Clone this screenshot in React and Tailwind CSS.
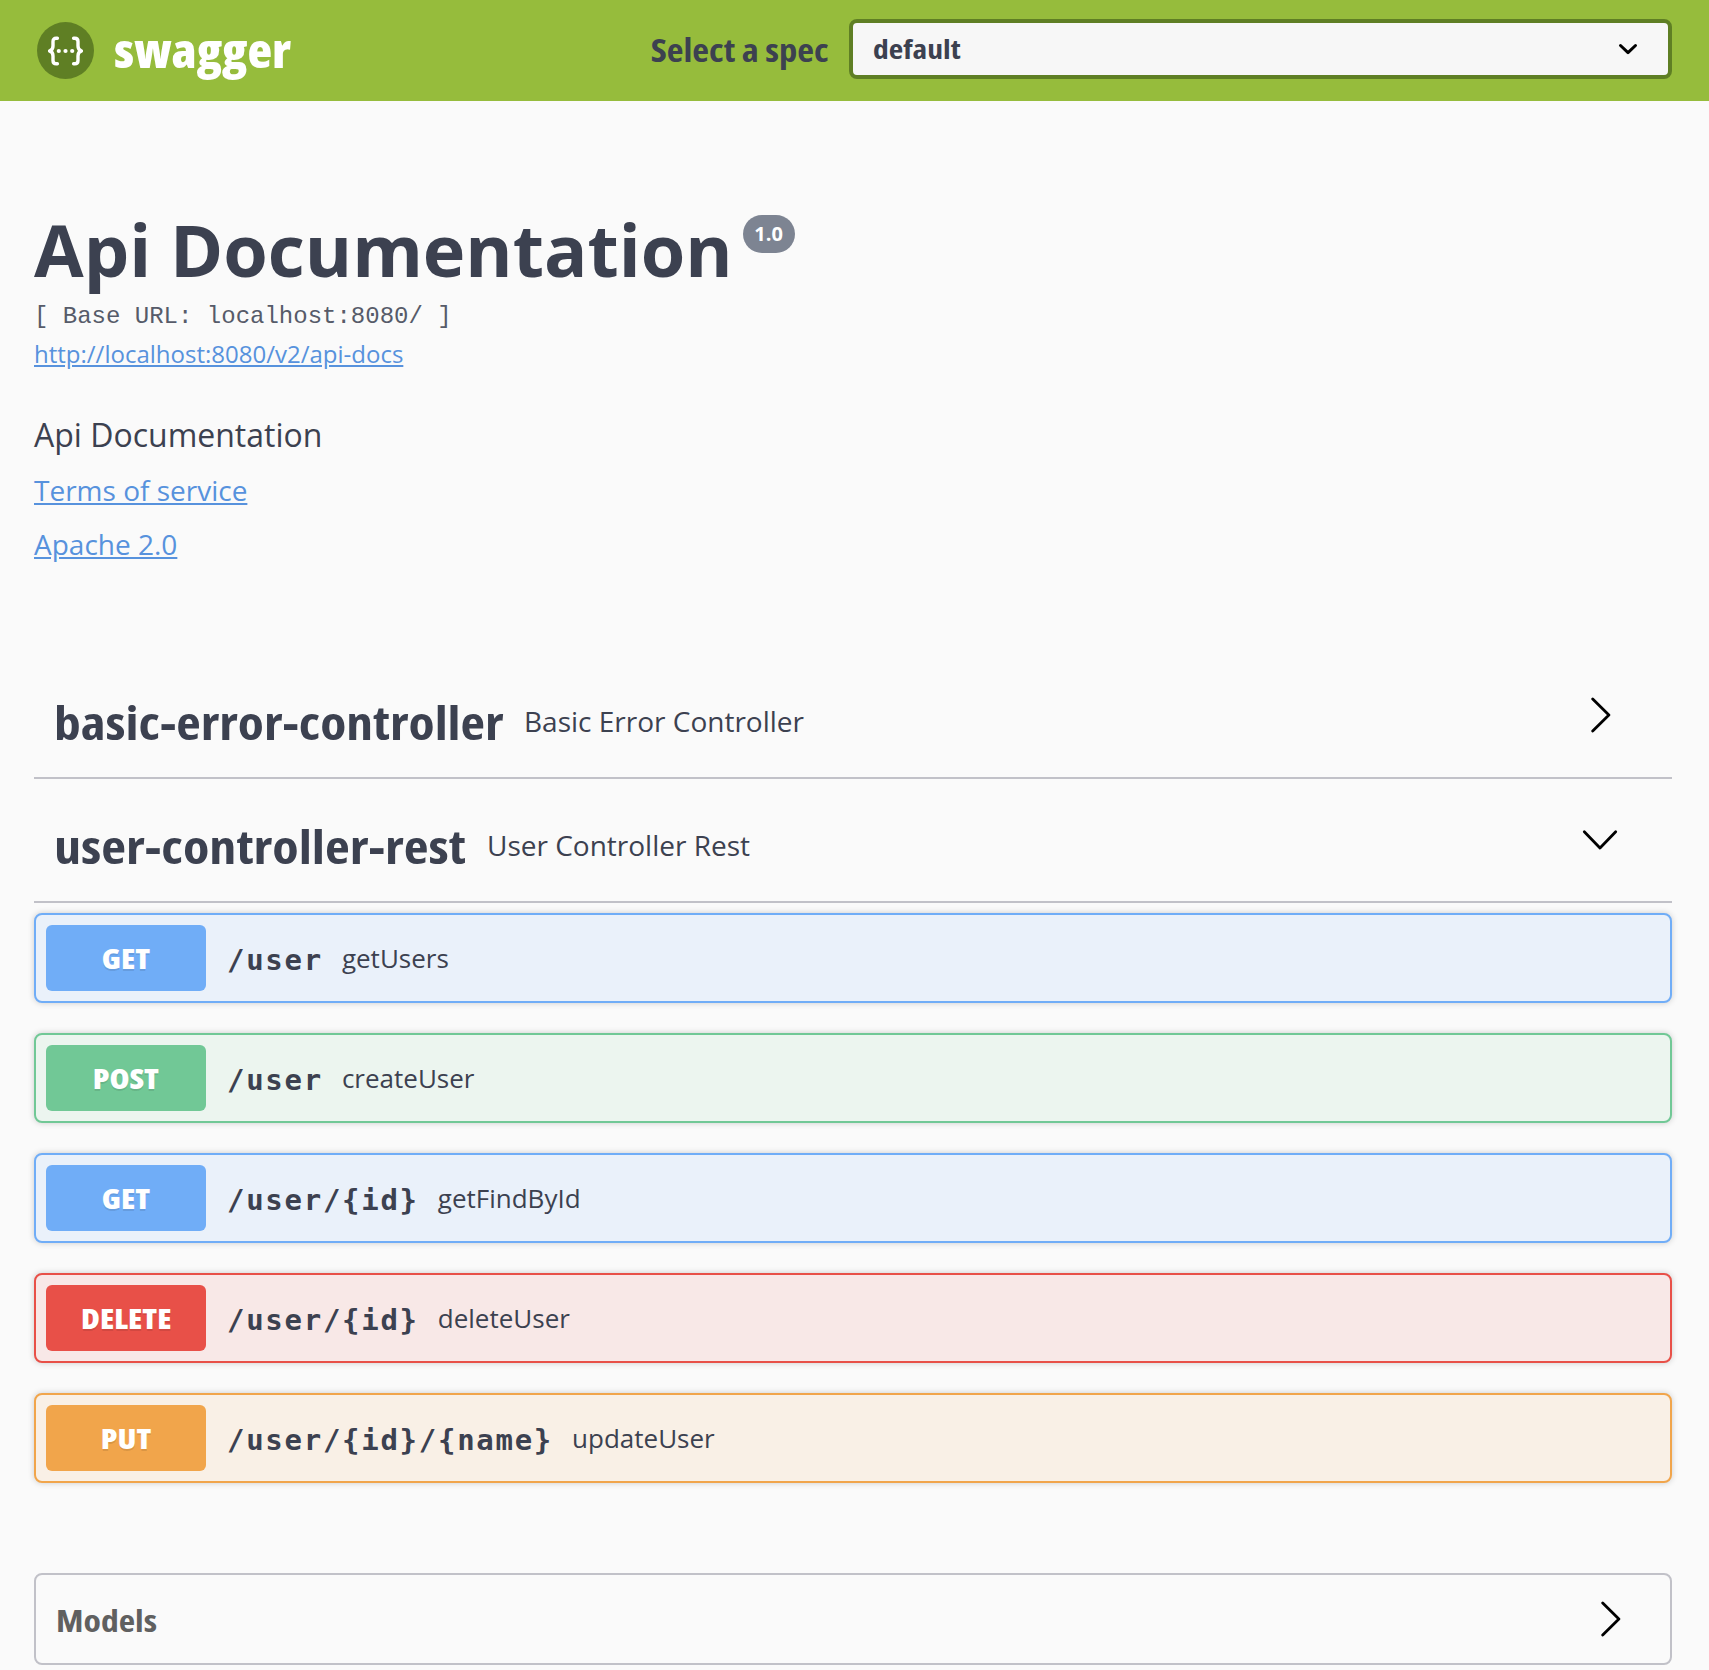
const OPERATIONS = [
  { method: "GET", path: "/user", summary: "getUsers" },
  { method: "POST", path: "/user", summary: "createUser" },
  { method: "GET", path: "/user/{id}", summary: "getFindById" },
  { method: "DELETE", path: "/user/{id}", summary: "deleteUser" },
  { method: "PUT", path: "/user/{id}/{name}", summary: "updateUser" },
];

const METHOD_STYLES = {
  GET: { row: "border-[#70adf7] bg-[#eaf1fa]", badge: "bg-[#70adf7]" },
  POST: { row: "border-[#71c896] bg-[#ecf5ef]", badge: "bg-[#71c896]" },
  DELETE: { row: "border-[#e85048] bg-[#f8e8e7]", badge: "bg-[#e85048]" },
  PUT: { row: "border-[#f1a54b] bg-[#f9f0e6]", badge: "bg-[#f1a54b]" },
};

function Logo() {
  return (
    <svg className="mt-[3px] size-[57px]" viewBox="0 0 57 57" fill="none">
      <circle cx="28.5" cy="28.5" r="28.5" fill="#5f7f24" />
      <g stroke="#fff" strokeWidth="3.4" strokeLinecap="round" strokeLinejoin="round">
        <path d="M20.4 16.2h-1.2c-2.2 0-3.2 1.2-3.2 3.3v4.6c0 2.7-1.2 4.3-3.4 4.9 2.2.6 3.4 2.2 3.4 4.9v4.6c0 2.1 1 3.3 3.2 3.3h1.2" />
        <path d="M36.6 16.2h1.2c2.2 0 3.2 1.2 3.2 3.3v4.6c0 2.7 1.2 4.3 3.4 4.9-2.2.6-3.4 2.2-3.4 4.9v4.6c0 2.1-1 3.3-3.2 3.3h-1.2" />
      </g>
      <g fill="#fff">
        <circle cx="21.8" cy="29" r="2.1" />
        <circle cx="28.5" cy="29" r="2.1" />
        <circle cx="35.2" cy="29" r="2.1" />
      </g>
    </svg>
  );
}

function Chevron({ open }) {
  return (
    <svg className="size-9 shrink-0" viewBox="0 0 36 36" fill="none" stroke="#000" strokeWidth="2.8" strokeLinecap="round" strokeLinejoin="round">
      <path d={open ? "M2.3 10.8 18 27l15.700-16.200" : "m10.700 2.100 16.200 16-16.200 16"} />
    </svg>
  );
}

function Topbar() {
  return (
    <header className="h-[101px] bg-[#96bc3c] pt-[19px] pr-[37px] pl-[37px]">
      <div className="flex h-[60px] items-center">
        <Logo />
        <span className="ml-[20px] origin-left scale-x-[1.06] pt-px text-[48px] leading-[60px] font-extrabold text-white font-stretch-[75%]">swagger</span>
        <label className="ml-auto origin-right scale-x-[1.143] pt-[2px] text-[32px] leading-[60px] font-bold font-stretch-[75%]">Select a spec</label>
        <div className="ml-[20px] flex h-[60px] w-[823px] items-center justify-between rounded-[8px] border-4 border-[#5f7f24] bg-[#f7f7f7] pr-[29px] pl-[20px]">
          <span className="origin-left scale-x-[1.169] text-[27px] leading-[52px] font-bold font-stretch-[75%]">default</span>
          <svg className="size-[22px]" viewBox="0 0 22 22" fill="none" stroke="#000" strokeWidth="3" strokeLinecap="round" strokeLinejoin="round">
            <path d="m3.500 7.500 7.500 7.200 7.500-7.200" />
          </svg>
        </div>
      </div>
    </header>
  );
}

function Info() {
  return (
    <section className="flex flex-col items-start">
      <div className="flex h-[98px] items-start">
        <h1 className="text-[72px] leading-[98px] font-bold whitespace-nowrap">Api Documentation</h1>
        <span className="mt-[15px] ml-[10px] flex h-[38px] w-[52px] items-center justify-center rounded-full bg-[#7d8492] text-[20px] leading-none font-bold text-white">
          1.0
        </span>
      </div>
      <pre className="mt-[3px] font-['Liberation_Mono',monospace] text-[24px] leading-[32px] text-[#565b69]">[ Base URL: localhost:8080/ ]</pre>
      <a className="mt-[5px] text-[24px] leading-[32px] text-[#5792dd] underline">http://localhost:8080/v2/api-docs</a>
      <p className="mt-[43px] text-[32px] leading-[44px]">Api Documentation</p>
      <a className="mt-[13px] text-[28px] leading-[40px] text-[#5792dd] underline">Terms of service</a>
      <a className="mt-[14px] text-[28px] leading-[40px] text-[#5792dd] underline">Apache 2.0</a>
    </section>
  );
}

function TagHeader({ name, nameWidth, nameScale, description, open }) {
  return (
    <div className="flex h-[124px] items-center border-b-2 border-[#c1c1c8] pr-[54px] pl-[20px]">
      <h3 className={`${nameWidth} pt-[11px]`}>
        <span className={`inline-block origin-left text-[47px] leading-[60px] font-bold whitespace-nowrap font-stretch-[75%] ${nameScale}`}>{name}</span>
      </h3>
      <p className="ml-[20px] flex-1 pt-[10px] text-[28px] leading-[40px]">{description}</p>
      <div className="pb-[2px]">
        <Chevron open={open} />
      </div>
    </div>
  );
}

function Operation({ method, path, summary }) {
  const style = METHOD_STYLES[method];
  return (
    <div className={`flex h-[90px] items-center rounded-[8px] border-2 px-[10px] shadow-[0_0_6px_rgba(0,0,0,0.19)] ${style.row}`}>
      <span className={`flex h-[66px] w-[160px] items-center justify-center rounded-[6px] text-white ${style.badge}`}>
        <span className="scale-x-[1.150] text-[28px] leading-[40px] font-extrabold font-stretch-[75%] [text-shadow:0_2px_0_rgba(0,0,0,0.1)]">{method}</span>
      </span>
      <span className="ml-[21px] pt-[3px] font-['DejaVu_Sans_Mono',monospace] text-[29px] leading-[40px] font-bold tracking-[1.720px] whitespace-nowrap">{path}</span>
      <span className="ml-[19px] text-[26px] leading-[40px]">{summary}</span>
    </div>
  );
}

export default function App() {
  return (
    <div className="h-[1670px] overflow-hidden bg-[#fafafa] font-['Open_Sans',sans-serif] text-[#3c4150]">
      <Topbar />
      <main className="pt-[99px] pr-[37px] pl-[34px]">
        <Info />
        <div className="mt-[91px]">
          <TagHeader name="basic-error-controller" nameWidth="w-[450px]" nameScale="scale-x-[1.138]" description="Basic Error Controller" />
          <TagHeader name="user-controller-rest" nameWidth="w-[413px]" nameScale="scale-x-[1.151]" description="User Controller Rest" open />
          <div className="mt-[10px] flex flex-col gap-[30px]">
            {OPERATIONS.map((op) => (
              <Operation key={op.method + op.path} {...op} />
            ))}
          </div>
        </div>
        <section className="mt-[90px] flex h-[92px] items-center justify-between rounded-[8px] border-2 border-[#c1c1c8] pr-[42px] pl-[20px]">
          <h4 className="origin-left scale-x-[1.15] pt-px text-[31px] leading-[44px] font-bold text-[#606060] font-stretch-[75%]">Models</h4>
          <Chevron />
        </section>
      </main>
    </div>
  );
}
